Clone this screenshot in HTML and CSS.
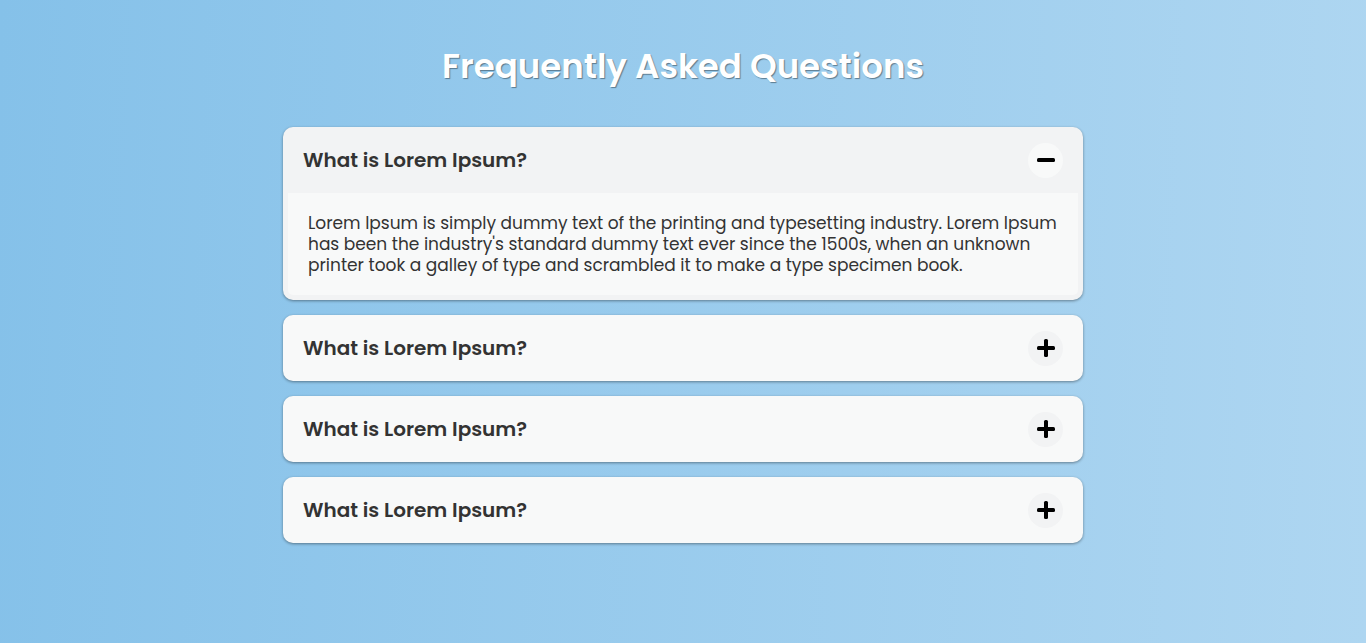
FILE: index.html
```html
<!DOCTYPE html>
<html lang="en">
<head>
<meta charset="utf-8">
<meta name="viewport" content="width=device-width, initial-scale=1">
<title>Frequently Asked Questions</title>
<link rel="stylesheet" href="styles.css">
</head>
<body>
<main class="faq">
  <h1 class="faq-title">Frequently Asked Questions</h1>
  <section class="card open">
    <div class="card-header">
      <h2 class="question" id="q1">What is Lorem Ipsum?</h2>
      <button class="toggle" type="button" aria-labelledby="q1" aria-expanded="true"><svg class="icon" viewBox="0 0 18 18" aria-hidden="true"><rect y="7" width="18" height="4" rx="1.5"/><rect class="vertical" x="7" width="4" height="18" rx="1.5"/></svg></button>
    </div>
    <div class="answer"><p class="answer-text">Lorem Ipsum is simply dummy text of the printing and typesetting industry. Lorem Ipsum has been the industry's standard dummy text ever since the 1500s, when an unknown printer took a galley of type and scrambled it to make a type specimen book.</p></div>
  </section>
  <section class="card">
    <div class="card-header">
      <h2 class="question" id="q2">What is Lorem Ipsum?</h2>
      <button class="toggle" type="button" aria-labelledby="q2" aria-expanded="false"><svg class="icon" viewBox="0 0 18 18" aria-hidden="true"><rect y="7" width="18" height="4" rx="1.5"/><rect class="vertical" x="7" width="4" height="18" rx="1.5"/></svg></button>
    </div>
  </section>
  <section class="card">
    <div class="card-header">
      <h2 class="question" id="q3">What is Lorem Ipsum?</h2>
      <button class="toggle" type="button" aria-labelledby="q3" aria-expanded="false"><svg class="icon" viewBox="0 0 18 18" aria-hidden="true"><rect y="7" width="18" height="4" rx="1.5"/><rect class="vertical" x="7" width="4" height="18" rx="1.5"/></svg></button>
    </div>
  </section>
  <section class="card">
    <div class="card-header">
      <h2 class="question" id="q4">What is Lorem Ipsum?</h2>
      <button class="toggle" type="button" aria-labelledby="q4" aria-expanded="false"><svg class="icon" viewBox="0 0 18 18" aria-hidden="true"><rect y="7" width="18" height="4" rx="1.5"/><rect class="vertical" x="7" width="4" height="18" rx="1.5"/></svg></button>
    </div>
  </section>
</main>
<script src="script.js"></script>
</body>
</html>
```
FILE: styles.css
```css
* {
  box-sizing: border-box;
  margin: 0;
  padding: 0;
}

body {
  min-height: 100vh;
  background: linear-gradient(92deg, #85c1e9, #aed6f1);
  color: #333;
  font-family: Poppins, Inter, "Open Sans", sans-serif;
}

.faq {
  display: flex;
  flex-direction: column;
  gap: 15px;
  max-width: 840px;
  margin: 0 auto;
  padding: 40px 20px;
}

.faq-title {
  margin-bottom: 20px;
  color: #fff;
  font-size: 34px;
  font-weight: 600;
  line-height: 52px;
  text-align: center;
  text-shadow: 1px 1px 1px rgba(0, 0, 0, 0.4);
}

.card {
  overflow: hidden;
  border-radius: 10px;
  background: #f8f9f9;
  box-shadow: 0 1px 3px rgba(0, 0, 0, 0.4);
}

.card.open {
  background: #f2f3f4;
}

.card-header {
  display: flex;
  align-items: center;
  justify-content: space-between;
  gap: 20px;
  padding: 15px 20px;
}

.question {
  font-size: 20px;
  font-weight: 600;
  line-height: 36px;
}

.toggle {
  display: grid;
  flex: none;
  place-items: center;
  width: 35px;
  height: 35px;
  border: none;
  border-radius: 50%;
  background: #f2f3f4;
  cursor: pointer;
}

.open .toggle {
  background: #f8f9f9;
}

.icon {
  width: 18px;
  height: 18px;
  fill: #000;
}

.open .vertical {
  display: none;
}

.answer {
  display: none;
  margin: 0 5px 5px;
  padding: 20px 20px 19px;
  border-radius: 0 0 5px 5px;
  background: #f8f9f9;
}

.open .answer {
  display: block;
}

.answer-text {
  font-size: 17px;
  line-height: 21px;
}
```
FILE: script.js
```js
document.querySelectorAll(".toggle").forEach((button) => {
  button.addEventListener("click", () => {
    const open = button.closest(".card").classList.toggle("open");
    button.setAttribute("aria-expanded", String(open));
  });
});
```
